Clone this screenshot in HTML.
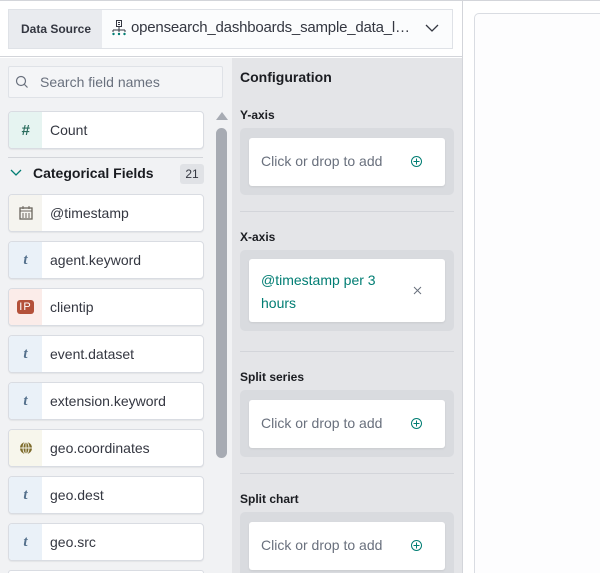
<!DOCTYPE html>
<html style="width:600px;height:573px;overflow:hidden"><head><style>
*{box-sizing:border-box;margin:0;padding:0}
body{width:600px;height:573px;overflow:hidden;background:#fff;font-family:"Liberation Sans",sans-serif;position:relative;color:#343741}
.a{position:absolute}
.field{position:absolute;left:8px;width:196px;height:38px;background:#fff;border:1px solid #d9dce2;border-radius:4px;box-shadow:0 1px 1px rgba(0,0,0,.06);overflow:hidden}
.field .ic{position:absolute;left:0;top:0;width:33px;height:36px;display:flex;align-items:center;justify-content:center;font-weight:bold;font-style:italic;color:#54708c;font-size:15px;font-family:"Liberation Serif",serif}
.field .tx{position:absolute;left:41px;top:10px;font-size:14px;color:#343741}
.t{background:#eaf1f8}
.lbl{position:absolute;left:240px;font-size:12px;font-weight:bold;color:#1a1c21}
.outer{position:absolute;left:240px;width:214px;background:#d9dbdf;border-radius:5px}
.inner{position:absolute;left:249px;width:196px;background:#fff;border-radius:3px;box-shadow:0 1px 2px rgba(0,0,0,.08);font-size:14px;color:#69707d}
.inner span{position:absolute;left:12px;top:15px}
.plus{position:absolute;left:162px;top:18px;width:11px;height:11px}
.div{position:absolute;left:240px;width:214px;height:1px;background:#d3d5da}
</style></head><body>
<div class="a" style="left:0;top:0;width:600px;height:1px;background:#d3d5da"></div>
<div class="a" style="left:0;top:1px;width:462px;height:56px;background:#fff;border-bottom:1px solid #d3d5da"></div>
<div class="a" style="left:8px;top:9px;width:445px;height:40px;border:1px solid #dfe2e7;background:#fbfcfd"></div>
<div class="a" style="left:9px;top:10px;width:93px;height:38px;background:#e9ebef;font-size:12px;font-weight:bold;color:#343741;padding:12px 0 0 12px">Data Source</div>
<svg class="a" style="left:112px;top:20px" width="14" height="18" viewBox="0 0 14 18"><rect x="4.5" y="0.5" width="5" height="6" fill="none" stroke="#343741"/><path d="M6 2.5h2M6 4.5h2M7 7v3M1 10h12M1 10v2M7 10v2M13 10v2" stroke="#343741" fill="none"/><circle cx="1.5" cy="14" r="1.2" fill="#017d73"/><circle cx="7" cy="14" r="1.2" fill="#017d73"/><circle cx="12.5" cy="14" r="1.2" fill="#017d73"/></svg>
<div class="a" style="left:131px;top:19px;font-size:15px;color:#343741;letter-spacing:-0.2px">opensearch_dashboards_sample_data_l…</div>
<svg class="a" style="left:425px;top:24px" width="14" height="9"><path d="M1 1l6 6 6-6" stroke="#343741" fill="none" stroke-width="1.3"/></svg>
<div class="a" style="left:462px;top:1px;width:1px;height:572px;background:#d3d5da"></div>

<div class="a" style="left:0;top:58px;width:232px;height:515px;background:#f1f2f4"></div>
<div class="a" style="left:8px;top:66px;width:215px;height:32px;border:1px solid #dfe2e7;background:#f4f5f7;border-radius:2px"></div>
<svg class="a" style="left:15px;top:75px" width="14" height="14"><circle cx="6" cy="6" r="4.5" stroke="#69707d" fill="none" stroke-width="1.2"/><path d="M9.5 9.5l3 3" stroke="#69707d" stroke-width="1.2"/></svg>
<div class="a" style="left:40px;top:74px;font-size:14px;color:#69707d">Search field names</div>

<div class="field" style="top:111px"><div class="ic" style="background:#e6f4f1;color:#2b6d5e;font-style:italic;font-family:'Liberation Sans'">#</div><div class="tx">Count</div></div>
<div class="a" style="left:8px;top:157px;width:195px;height:1px;background:#d3d5da"></div>
<svg class="a" style="left:10px;top:169px" width="13" height="9"><path d="M1 1l5 5 5-5" stroke="#017d73" fill="none" stroke-width="1.3"/></svg>
<div class="a" style="left:33px;top:165px;font-size:14px;font-weight:bold;color:#1a1c21">Categorical Fields</div>
<div class="a" style="left:180px;top:164px;width:24px;height:20px;background:#e0e2e6;border-radius:3px;font-size:12px;text-align:center;padding-top:3px">21</div>

<div class="field" style="top:194px"><div class="ic" style="background:#f5f4ef"><svg width="14" height="14"><rect x="1" y="2" width="12" height="11" fill="none" stroke="#6a655c" stroke-width="1.3"/><path d="M1 5h12M4 0v3M10 0v3M4 7v5M7 7v5M10 7v5" stroke="#6a655c"/></svg></div><div class="tx">@timestamp</div></div>
<div class="field" style="top:241px"><div class="ic t">t</div><div class="tx">agent.keyword</div></div>
<div class="field" style="top:288px"><div class="ic" style="background:#fbece9"><span style="background:#b4513a;color:#fff;font:11px 'Liberation Sans';border-radius:3px;padding:1px 2px;letter-spacing:1px">IP</span></div><div class="tx">clientip</div></div>
<div class="field" style="top:335px"><div class="ic t">t</div><div class="tx">event.dataset</div></div>
<div class="field" style="top:382px"><div class="ic t">t</div><div class="tx">extension.keyword</div></div>
<div class="field" style="top:429px"><div class="ic" style="background:#f7f6ec"><svg width="14" height="14"><circle cx="7" cy="7" r="6" fill="#7d6b2b"/><path d="M1 7h12M7 1v12" stroke="#f7f6ec" stroke-width="0.9"/><ellipse cx="7" cy="7" rx="3" ry="6" fill="none" stroke="#f7f6ec" stroke-width="0.9"/></svg></div><div class="tx">geo.coordinates</div></div>
<div class="field" style="top:476px"><div class="ic t">t</div><div class="tx">geo.dest</div></div>
<div class="field" style="top:523px"><div class="ic t">t</div><div class="tx">geo.src</div></div>
<div class="a" style="left:8px;top:570px;width:196px;height:3px;background:#fff;border:1px solid #d9dce2;border-bottom:none;border-radius:4px 4px 0 0"></div>

<div class="a" style="left:216px;top:112px;width:0;height:0;border-left:6px solid transparent;border-right:6px solid transparent;border-bottom:8px solid #a7abb3"></div>
<div class="a" style="left:216px;top:128px;width:11px;height:330px;background:#a7abb3;border-radius:6px"></div>

<div class="a" style="left:232px;top:58px;width:230px;height:515px;background:#e4e5e8"></div>
<div class="a" style="left:240px;top:69px;font-size:14px;font-weight:bold;color:#1a1c21">Configuration</div>
<div class="lbl" style="top:108px">Y-axis</div>
<div class="outer" style="top:128px;height:67px"></div>
<div class="inner" style="top:138px;height:48px"><span>Click or drop to add</span><svg class="plus" viewBox="0 0 11 11"><circle cx="5.5" cy="5.5" r="5" fill="none" stroke="#017d73"/><path d="M5.5 2.5v6M2.5 5.5h6" stroke="#017d73"/></svg></div>
<div class="div" style="top:211px"></div>
<div class="lbl" style="top:230px">X-axis</div>
<div class="outer" style="top:250px;height:81px"></div>
<div class="inner" style="top:259px;height:63px;color:#017d73"><span style="top:10px;line-height:23px">@timestamp per 3<br>hours</span><svg style="position:absolute;left:164px;top:27px" width="9" height="9"><path d="M1 1l7 7M8 1l-7 7" stroke="#69707d"/></svg></div>
<div class="div" style="top:351px"></div>
<div class="lbl" style="top:370px">Split series</div>
<div class="outer" style="top:390px;height:67px"></div>
<div class="inner" style="top:400px;height:48px"><span>Click or drop to add</span><svg class="plus" viewBox="0 0 11 11"><circle cx="5.5" cy="5.5" r="5" fill="none" stroke="#017d73"/><path d="M5.5 2.5v6M2.5 5.5h6" stroke="#017d73"/></svg></div>
<div class="div" style="top:473px"></div>
<div class="lbl" style="top:492px">Split chart</div>
<div class="outer" style="top:512px;height:61px;border-radius:5px 5px 0 0"></div>
<div class="inner" style="top:522px;height:48px"><span>Click or drop to add</span><svg class="plus" viewBox="0 0 11 11"><circle cx="5.5" cy="5.5" r="5" fill="none" stroke="#017d73"/><path d="M5.5 2.5v6M2.5 5.5h6" stroke="#017d73"/></svg></div>

<div class="a" style="left:474px;top:13px;width:126px;height:560px;border:1px solid #d9dce2;border-right:none;border-bottom:none;border-radius:5px 0 0 0;background:#fdfdfe"></div>
</body></html>
